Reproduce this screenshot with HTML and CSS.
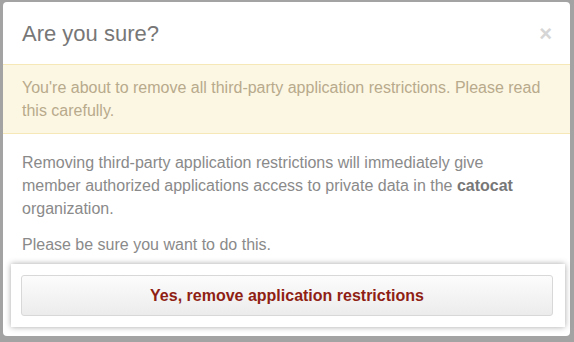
FILE: index.html
```html
<!DOCTYPE html>
<html lang="en">
<head>
  <meta charset="UTF-8">
  <title>Are you sure?</title>
  <link rel="stylesheet" href="styles.css">
</head>
<body>
  <div class="modal">
    <div class="modal-header">
      <div class="modal-title">Are you sure?</div>
      <span class="close-button">&times;</span>
    </div>

    <div class="flash-warning">
      You're about to remove all third-party application restrictions. Please read this carefully.
    </div>

    <div class="modal-body">
      <p>Removing third-party application restrictions will immediately give member authorized applications access to private data in the <strong>catocat</strong> organization.</p>
      <p>Please be sure you want to do this.</p>
    </div>

    <!-- zone mise en avant -->
    <div class="modal-footer">
      <button class="danger-button">Yes, remove application restrictions</button>
    </div>
  </div>
</body>
</html>
```

FILE: styles.css
```css
body {
  font-family: "Liberation Sans", Arial, sans-serif;
  background-color: #a3a3a3;
  margin: 0;
  height: 342px;
  overflow: hidden;
}

.modal {
  margin: 2px 4px 0 3px;
  height: 334px;
  background-color: #ffffff;
  border-radius: 4px;
  display: flex;
  flex-direction: column;
}

.modal-header {
  flex-shrink: 0;
  height: 62px;
  padding: 0 22px 0 19px;
  display: flex;
  align-items: center;
  justify-content: space-between;
}

.modal-title {
  font-size: 22px;
  color: #777777;
  padding-top: 2px;
}

.close-button {
  font-size: 22px;
  font-weight: bold;
  color: #d6d6d6;
  margin-right: -4px;
  padding-top: 2px;
}

.flash-warning {
  flex-shrink: 0;
  background-color: #fcf7e3;
  border-top: 1px solid #f7e8b8;
  border-bottom: 1px solid #f7e8b8;
  color: #b8aa8c;
  font-size: 16px;
  line-height: 23px;
  padding: 11px 18px 11px 19px;
}

.modal-body {
  flex: 1;
  min-height: 0;
  padding: 17px 30px 0 19px;
  color: #8a8a8a;
  font-size: 16px;
  line-height: 23px;
}

.modal-body p {
  margin: 0 0 13px;
}

.modal-body p:last-child {
  margin-bottom: 0;
}

.modal-body strong {
  color: #777777;
}

.modal-footer {
  flex-shrink: 0;
  margin: 0 5px 9px 8px;
  padding: 11px 12px 11px 10px;
  background-color: #ffffff;
  box-shadow: 0 0 6px rgba(0, 0, 0, 0.35);
}

.danger-button {
  display: block;
  width: 100%;
  height: 41px;
  font-family: inherit;
  font-size: 16px;
  font-weight: bold;
  color: #8f1f14;
  background: linear-gradient(#fcfcfc, #ececec);
  border: 1px solid #d8d8d8;
  border-radius: 3px;
}
```
